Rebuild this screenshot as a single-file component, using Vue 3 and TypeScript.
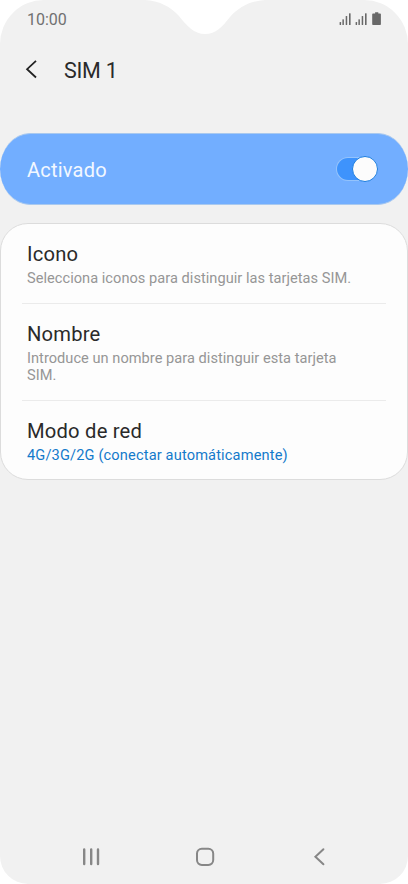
<script setup lang="ts">
import { ref } from 'vue'

interface Setting {
  title: string
  summary: string
  active?: boolean
}

const enabled = ref(true)

const settings: Setting[] = [
  { title: 'Icono', summary: 'Selecciona iconos para distinguir las tarjetas SIM.' },
  { title: 'Nombre', summary: 'Introduce un nombre para distinguir esta tarjeta SIM.' },
  { title: 'Modo de red', summary: '4G/3G/2G (conectar automáticamente)', active: true },
]
</script>

<template>
  <div class="phone">
    <svg class="notch" width="120" height="36" viewBox="0 0 120 36" aria-hidden="true">
      <path d="M0 0C14 1 25 6 34 16C42 26 49 34 60 34C71 34 77 27 85 17C94 7 105 1 120 0Z" fill="#fff" />
    </svg>

    <div class="status">
      <span class="clock">10:00</span>
      <svg class="status-icons" width="44" height="14" viewBox="0 0 44 14" fill="#686868" aria-hidden="true">
        <g v-for="x in [0, 16]" :key="x" :transform="`translate(${x} 0)`">
          <rect x="0.6" y="10" width="1.5" height="3" rx=".5" />
          <rect x="3.4" y="7.2" width="1.5" height="5.8" rx=".5" />
          <rect x="6.7" y="4" width="1.5" height="9" rx=".5" />
          <rect x="10" y="1.2" width="1.6" height="11.8" rx=".5" />
        </g>
        <path d="M36.1 .3H39.3V1.5H41.1Q41.9 1.5 41.9 2.3V12.2Q41.9 13 41.1 13H34Q33.2 13 33.2 12.2V2.3Q33.2 1.5 34 1.5H36.1Z" />
      </svg>
    </div>

    <header class="header">
      <svg width="12" height="20" viewBox="0 0 12 20" fill="none" stroke="#222" stroke-width="1.8" aria-hidden="true">
        <path d="M11 .9L2.1 9.2L11 17.5" />
      </svg>
      <h1>SIM 1</h1>
    </header>

    <button class="switch-card" type="button" @click="enabled = !enabled">
      <span class="switch-label">Activado</span>
      <span class="toggle" :class="{ off: !enabled }"><span class="knob"></span></span>
    </button>

    <ul class="list">
      <li v-for="item in settings" :key="item.title" class="row">
        <h2>{{ item.title }}</h2>
        <p :class="{ active: item.active }">{{ item.summary }}</p>
      </li>
    </ul>

    <nav class="nav">
      <svg width="18" height="20" viewBox="0 0 18 20" stroke="#878787" stroke-width="2.4" stroke-linecap="round" aria-hidden="true">
        <path d="M2.2 2.5V17M9.2 2.5V17M16 2.5V17" />
      </svg>
      <svg width="20" height="20" viewBox="0 0 20 20" fill="none" stroke="#878787" stroke-width="2" aria-hidden="true">
        <rect x="1" y="1.7" width="16.2" height="16.2" rx="4.8" />
      </svg>
      <svg width="14" height="20" viewBox="0 0 14 20" fill="none" stroke="#878787" stroke-width="2" stroke-linecap="round" aria-hidden="true">
        <path d="M11.4 2.2L3.4 9.7L11.4 17.2" />
      </svg>
    </nav>
  </div>
</template>

<style>
body {
  background: #fff;
}
</style>

<style scoped>
.phone {
  position: relative;
  box-sizing: border-box;
  display: flex;
  flex-direction: column;
  width: 408px;
  height: 884px;
  overflow: hidden;
  border-radius: 44px 44px 28px 28px;
  background: #f1f1f1;
  font-family: Roboto, sans-serif;
  color: #2a2a2a;
}

.notch {
  position: absolute;
  top: 0;
  left: 145px;
}

.status {
  display: flex;
  align-items: center;
  justify-content: space-between;
  height: 38px;
  padding: 0 25px 0 27px;
}

.clock {
  font-size: 16px;
  color: #707070;
}

.header {
  display: flex;
  align-items: center;
  gap: 27px;
  height: 64px;
  padding-left: 25px;
}

h1,
h2,
p {
  margin: 0;
  font-weight: 400;
}

h1 {
  padding-top: 2px;
  font-size: 21.5px;
  line-height: 26px;
  letter-spacing: -0.25px;
}

.switch-card {
  display: flex;
  align-items: center;
  justify-content: space-between;
  box-sizing: border-box;
  width: 408px;
  height: 72px;
  margin: 31px 0 18px;
  padding: 0 30px 0 27px;
  border: 1px solid #a9c9ef;
  border-width: 1px 0;
  border-radius: 30px / 36px;
  background: #72aeff;
  color: #f2f8ff;
  font: 20px Roboto, sans-serif;
  text-align: left;
}

.switch-label {
  padding-top: 2px;
  letter-spacing: 0.22px;
}

.toggle {
  display: flex;
  align-items: center;
  justify-content: flex-end;
  box-sizing: border-box;
  width: 42px;
  height: 24px;
  margin-bottom: 1px;
  border-radius: 13px;
  background: linear-gradient(#3e93fc, #3e93fc) padding-box, #94c3fc;
  background-clip: padding-box, border-box;
  border: 1px solid transparent;
}

.toggle.off {
  justify-content: flex-start;
}

.knob {
  flex: none;
  box-sizing: border-box;
  width: 26px;
  height: 26px;
  margin-right: -1px;
  border: 1px solid #1b7de0;
  border-radius: 50%;
  background: #fcfcfc;
}

.list {
  box-sizing: border-box;
  width: 408px;
  height: 257px;
  margin: 0;
  padding: 0;
  border: 1px solid #dcdcdc;
  border-radius: 28px;
  background: #fdfdfd;
  list-style: none;
}

.row {
  margin: 0 21px;
  padding: 17px 25px 16px 5px;
}

.row + .row {
  border-top: 1px solid #ebebeb;
}

h2 {
  font-size: 20.2px;
  line-height: 26px;
  letter-spacing: 0.2px;
}

p {
  margin-top: 3px;
  font-size: 14.6px;
  line-height: 17px;
  letter-spacing: 0.03px;
  color: #969696;
}

p.active {
  letter-spacing: 0.15px;
  color: #147acb;
}

.nav {
  display: flex;
  align-items: center;
  justify-content: space-between;
  height: 54px;
  margin-top: auto;
  padding: 0 82px;
}
</style>
